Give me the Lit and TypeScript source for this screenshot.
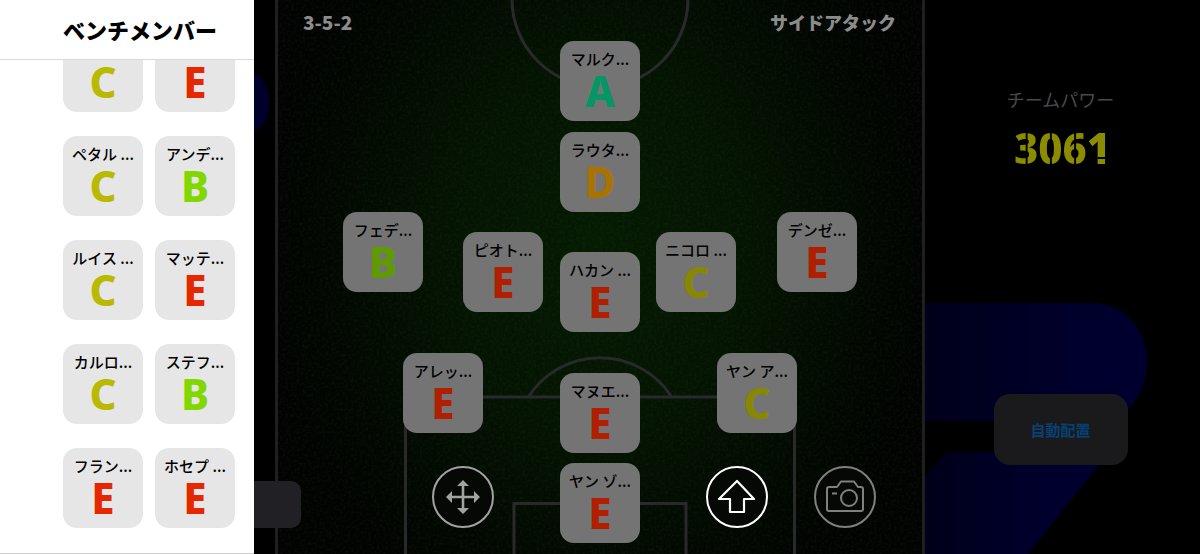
import { LitElement, html, css, svg } from "lit";
import { customElement, property } from "lit/decorators.js";
import { classMap } from "lit/directives/class-map.js";

type Grade = "A" | "B" | "C" | "D" | "E";

interface Member {
  name: string;
  grade: Grade;
}

interface Starter extends Member {
  /** Horizontal distance of the card's centre from the middle of the pitch. */
  x: number;
  /** Distance of the card's top from the top of the pitch. */
  y: number;
}

const bench: Member[] = [
  { name: "", grade: "C" },
  { name: "", grade: "E" },
  { name: "ペタル ...", grade: "C" },
  { name: "アンデ...", grade: "B" },
  { name: "ルイス ...", grade: "C" },
  { name: "マッテ...", grade: "E" },
  { name: "カルロ...", grade: "C" },
  { name: "ステフ...", grade: "B" },
  { name: "フラン...", grade: "E" },
  { name: "ホセプ ...", grade: "E" },
];

const starters: Starter[] = [
  { name: "マルク...", grade: "A", x: 0, y: 41 },
  { name: "ラウタ...", grade: "D", x: 0, y: 132 },
  { name: "フェデ...", grade: "B", x: -217, y: 212 },
  { name: "ピオト...", grade: "E", x: -97, y: 232 },
  { name: "ハカン ...", grade: "E", x: 0, y: 252 },
  { name: "ニコロ ...", grade: "C", x: 96, y: 232 },
  { name: "デンゼ...", grade: "E", x: 217, y: 212 },
  { name: "アレッ...", grade: "E", x: -157, y: 353 },
  { name: "マヌエ...", grade: "E", x: 0, y: 373 },
  { name: "ヤン ア...", grade: "C", x: 157, y: 353 },
  { name: "ヤン ゾ...", grade: "E", x: 0, y: 463 },
];

@customElement("player-card")
export class PlayerCard extends LitElement {
  @property() name = "";
  @property() grade: Grade = "E";
  @property({ type: Boolean }) dimmed = false;

  static styles = css`
    :host {
      display: block;
    }
    .card {
      display: flex;
      flex-direction: column;
      align-items: center;
      width: 80px;
      height: 80px;
      padding: 8px 0 0;
      border: 0;
      border-radius: 14px;
      background: #e6e6e6;
      color: #000;
      font-family: "Noto Sans CJK JP", sans-serif;
      cursor: pointer;
    }
    .name {
      height: 20px;
      font-size: 15px;
      font-weight: 500;
      line-height: 20px;
      white-space: pre;
    }
    .grade {
      font-family: "Noto Sans", sans-serif;
      font-size: 42px;
      font-weight: 800;
      line-height: 44px;
    }
    .a { color: #00e696; }
    .b { color: #82d700; }
    .c { color: #b9b900; }
    .d { color: #e6a000; }
    .e { color: #e62800; }
    .dimmed { background: #747475; }
    .dimmed .a { color: #059664; }
    .dimmed .b { color: #5f9b00; }
    .dimmed .c { color: #888800; }
    .dimmed .d { color: #a87300; }
    .dimmed .e { color: #b01f00; }
  `;

  render() {
    return html`
      <button class=${classMap({ card: true, dimmed: this.dimmed })} type="button">
        <span class="name">${this.name}</span>
        <span class="grade ${this.grade.toLowerCase()}">${this.grade}</span>
      </button>
    `;
  }
}

const moveIcon = svg`
  <g fill="none" stroke="currentColor" stroke-width="2.6">
    <path d="M31 17v28M17 31h28" />
  </g>
  <path fill="currentColor" d="M31 14l6 6h-12zM31 48l6-6h-12zM14 31l6-6v12zM48 31l-6-6v12z" />`;

const arrowIcon = svg`
  <path fill="none" stroke="currentColor" stroke-width="2.2" stroke-linejoin="round"
    d="M31 15L48 33H38V46H24V33H13Z" />`;

const cameraIcon = svg`
  <g fill="none" stroke="currentColor" stroke-width="2" stroke-linejoin="round">
    <path d="M13 23q0-2 2-2h8l4-5.500h13l4 5.500h3q2 0 2 2V43q0 2-2 2H15q-2 0-2-2z" />
    <circle cx="35" cy="32" r="8" />
    <path d="M18 27.500h5" />
  </g>`;

@customElement("app-root")
export class AppRoot extends LitElement {
  static styles = css`
    :host {
      display: block;
      position: relative;
      height: 100vh;
      overflow: hidden;
      background: #000;
      font-family: "Noto Sans CJK JP", sans-serif;
    }
    * {
      box-sizing: border-box;
    }
    .stage {
      display: grid;
      grid-template-columns: 1fr minmax(0, 650px) 1fr;
      height: 100%;
    }
    .wing {
      position: relative;
    }
    .shape {
      position: absolute;
      top: 0;
    }
    .shape.left {
      right: 0;
    }
    .shape.right {
      left: 0;
    }
    .pitch {
      position: relative;
      overflow: hidden;
      border: solid #1f1f22;
      border-width: 0 3px;
      background: radial-gradient(ellipse 330px 400px at 50% 250px, #051b02 0%, #041402 45%, #020901 78%, #010301 100%);
    }
    .lines {
      position: absolute;
      top: 0;
      left: calc(50% - 322px);
    }
    .caption {
      display: flex;
      position: relative;
      justify-content: space-between;
      margin: 0;
      padding: 8px 26px 0 25px;
      color: #8c8c8c;
      font-size: 18px;
      font-weight: 900;
      line-height: 28px;
    }
    .caption .formation {
      font-size: 19px;
    }
    .spot {
      position: absolute;
      margin-left: -40px;
    }
    .tool {
      position: absolute;
      top: 466px;
      width: 62px;
      height: 62px;
      margin-left: -31px;
      padding: 0;
      border: 2px solid currentColor;
      border-radius: 50%;
      background: #050805;
      cursor: pointer;
    }
    .tool svg {
      display: block;
      margin: -2px;
    }
    .move { left: calc(50% - 137px); color: #a2a2a2; }
    .swap { left: calc(50% + 137px); color: #fff; }
    .photo { left: calc(50% + 245px); color: #808080; }
    .power {
      display: flex;
      position: relative;
      flex-direction: column;
      align-items: center;
      padding: 85px 4px 0 0;
    }
    .power-label {
      margin: 0;
      color: #49494c;
      font-size: 18px;
      font-weight: 400;
      line-height: 28px;
    }
    .power-value {
      margin: 12px 0 0 4px;
      font-family: "Noto Sans", sans-serif;
      font-size: 42px;
      font-weight: 800;
      line-height: 46px;
      color: transparent;
      /* Stencil cuts: a level one through the last digit, upright ones through the rest. */
      background:
        linear-gradient(#8c8c00 70%, #000 70% 74%, #8c8c00 74%) 100% 0 / 25% 100% no-repeat,
        linear-gradient(90deg, #8c8c00 47%, #000 47% 54%, #8c8c00 54%) 0 0 / 25% 100%;
      -webkit-background-clip: text;
      background-clip: text;
    }
    .auto {
      width: 134px;
      height: 71px;
      margin-top: 223px;
      border: 0;
      border-radius: 16px;
      background: #1a1a1d;
      color: #074173;
      font-family: inherit;
      font-size: 15px;
      font-weight: 700;
      cursor: pointer;
    }
    .tab {
      position: absolute;
      top: 481px;
      left: 240px;
      width: 61px;
      height: 47px;
      border-radius: 10px;
      background: #212125;
    }
    .drawer {
      display: flex;
      position: absolute;
      inset: 0 auto 0 0;
      flex-direction: column;
      width: 254px;
      border-bottom: 1px solid #ccc;
      background: #fff;
    }
    .title {
      flex: none;
      margin: 0;
      padding: 13px 0 14px 63px;
      border-bottom: 1px solid #d9d9d9;
      color: #000;
      font-size: 22px;
      font-weight: 900;
      line-height: 32px;
      white-space: nowrap;
    }
    .members {
      display: flex;
      flex: 1;
      flex-direction: column;
      justify-content: flex-end;
      min-height: 0;
      overflow: hidden;
      padding: 0 19px 25px 63px;
    }
    .grid {
      display: grid;
      grid-template-columns: 80px 80px;
      gap: 24px 12px;
    }
  `;

  render() {
    return html`
      <main class="stage">
        <div class="wing">
          <svg class="shape left" width="275" height="554" aria-hidden="true">
            <path fill="#00002b" d="M0 72H250Q269 78 269 103Q269 126 252 132H0Z" />
          </svg>
        </div>

        <section class="pitch">
          <svg class="lines" width="644" height="554" viewBox="278 0 644 554" aria-hidden="true">
            <filter id="grass" x="0" y="0" width="100%" height="100%">
              <feTurbulence type="fractalNoise" baseFrequency="0.35" numOctaves="2" seed="4" />
              <feColorMatrix values="0 0 0 0 0.1  0 0 0 0 0.2  0 0 0 0 0.06  0.9 0 0 0 -0.36" />
            </filter>
            <rect x="278" width="644" height="554" filter="url(#grass)" opacity="0.2" />
            <g fill="none" stroke="#29292c" stroke-width="3">
              <circle cx="600" cy="-1" r="88" />
              <path d="M405.5 554V397H794.5V554M514 554V503.5H686V554M529 396A85 85 0 0 1 671 396" />
            </g>
          </svg>
          <p class="caption">
            <span class="formation">3-5-2</span>
            <span>サイドアタック</span>
          </p>
          ${starters.map(
            (p) => html`<player-card
              class="spot"
              style="left:calc(50% + ${p.x}px);top:${p.y}px"
              .name=${p.name}
              .grade=${p.grade}
              dimmed
            ></player-card>`
          )}
          <button class="tool move" type="button" aria-label="移動">
            <svg width="62" height="62" viewBox="0 0 62 62">${moveIcon}</svg>
          </button>
          <button class="tool swap" type="button" aria-label="入れ替え">
            <svg width="62" height="62" viewBox="0 0 62 62">${arrowIcon}</svg>
          </button>
          <button class="tool photo" type="button" aria-label="撮影">
            <svg width="62" height="62" viewBox="0 0 62 62">${cameraIcon}</svg>
          </button>
        </section>

        <aside class="wing">
          <svg class="shape right" width="275" height="554" aria-hidden="true">
            <defs>
              <linearGradient id="fade">
                <stop offset="0" stop-color="#00001a" />
                <stop offset="0.6" stop-color="#00002b" />
                <stop offset="1" stop-color="#000030" />
              </linearGradient>
            </defs>
            <path fill="url(#fade)" d="M0 303H166C200 303 222 330 222 362C222 384 212 402 198 414L190 421H0Z" />
            <path fill="url(#fade)" d="M0 477L22 452H184L103 554H0Z" />
          </svg>
          <div class="power">
            <h2 class="power-label">チームパワー</h2>
            <p class="power-value">3061</p>
            <button class="auto" type="button">自動配置</button>
          </div>
        </aside>
      </main>

      <div class="tab"></div>

      <section class="drawer">
        <h1 class="title">ベンチメンバー</h1>
        <div class="members">
          <div class="grid">
            ${bench.map((p) => html`<player-card .name=${p.name} .grade=${p.grade}></player-card>`)}
          </div>
        </div>
      </section>
    `;
  }
}
